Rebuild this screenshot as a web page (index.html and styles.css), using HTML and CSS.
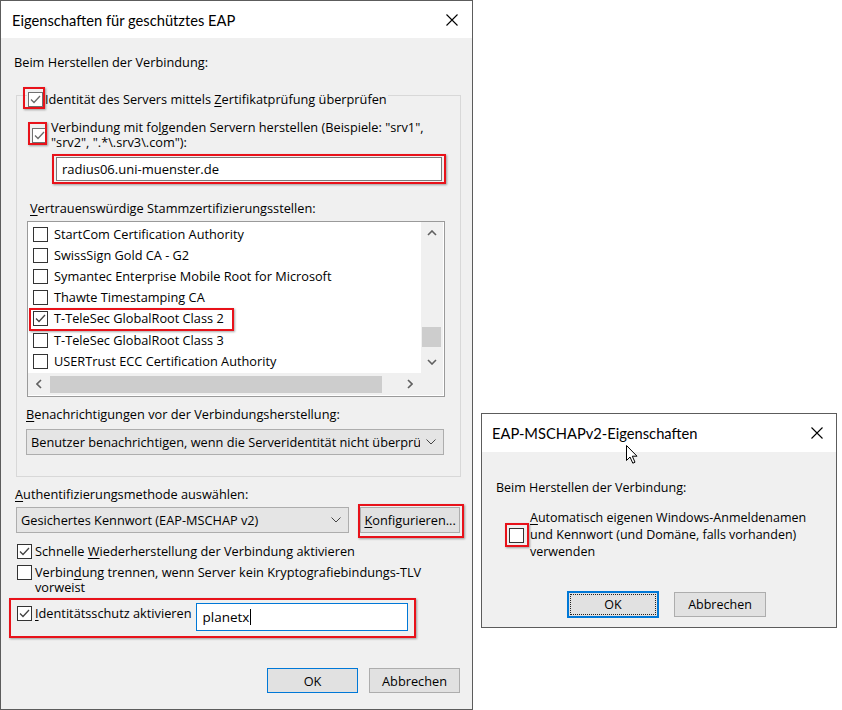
FILE: index.html
```html
<!DOCTYPE html>
<html lang="de">
<head>
<meta charset="utf-8">
<title>EAP</title>
<link rel="stylesheet" href="styles.css">
</head>
<body>
<div class="win eap">
  <div class="titlebar">
    <span class="title">Eigenschaften für geschütztes EAP</span>
    <svg class="close" width="12" height="12" viewBox="0 0 12 12"><path d="M0.5 0.5 L11.5 11.5 M11.5 0.5 L0.5 11.5" stroke="#000" stroke-width="1.1" fill="none"/></svg>
  </div>
  <div class="body">
    <div class="label intro">Beim Herstellen der Verbindung:</div>
    <div class="group">
      <div class="caption">
        <span class="cb gray checked"><svg viewBox="0 0 13 13"><path d="M2 6.5 L5 9.5 L11 3" stroke="#6b6b6b" stroke-width="1.3" fill="none"/></svg></span>
        <span class="txt">Identität des Servers mittels <u>Z</u>ertifikatprüfung überprüfen</span>
      </div>
      <div class="row servers">
        <span class="cb gray checked"><svg viewBox="0 0 13 13"><path d="M2 6.5 L5 9.5 L11 3" stroke="#6b6b6b" stroke-width="1.3" fill="none"/></svg></span>
        <span class="txt">Verbindung mit fo<u>l</u>genden Servern herstellen (Beispiele: "srv1",<br>"srv2", ".*\.srv3\.com"):</span>
      </div>
      <div class="textbox server-input">radius06.uni-muenster.de</div>
      <div class="label ca-label"><u>V</u>ertrauenswürdige Stammzertifizierungsstellen:</div>
      <div class="listbox">
        <div class="items">
          <div class="item"><span class="cb"></span>StartCom Certification Authority</div>
          <div class="item"><span class="cb"></span>SwissSign Gold CA - G2</div>
          <div class="item"><span class="cb"></span>Symantec Enterprise Mobile Root for Microsoft</div>
          <div class="item"><span class="cb"></span>Thawte Timestamping CA</div>
          <div class="item"><span class="cb checked"><svg viewBox="0 0 13 13"><path d="M2 6.5 L5 9.5 L11 3" stroke="#444" stroke-width="1.3" fill="none"/></svg></span>T-TeleSec GlobalRoot Class 2</div>
          <div class="item"><span class="cb"></span>T-TeleSec GlobalRoot Class 3</div>
          <div class="item"><span class="cb"></span>USERTrust ECC Certification Authority</div>
        </div>
        <div class="vscroll">
          <svg class="arr" width="10" height="6" viewBox="0 0 10 6"><path d="M1 5 L5 1 L9 5" stroke="#606060" stroke-width="1.6" fill="none"/></svg>
          <div class="vtrack"><div class="vthumb"></div></div>
          <svg class="arr" width="10" height="6" viewBox="0 0 10 6"><path d="M1 1 L5 5 L9 1" stroke="#606060" stroke-width="1.6" fill="none"/></svg>
        </div>
        <div class="hscroll">
          <svg class="arr" width="6" height="10" viewBox="0 0 6 10"><path d="M5 1 L1 5 L5 9" stroke="#606060" stroke-width="1.6" fill="none"/></svg>
          <div class="htrack"><div class="hthumb"></div></div>
          <svg class="arr" width="6" height="10" viewBox="0 0 6 10"><path d="M1 1 L5 5 L1 9" stroke="#606060" stroke-width="1.6" fill="none"/></svg>
        </div>
        <div class="corner"></div>
      </div>
      <div class="label notify-label"><u>B</u>enachrichtigungen vor der Verbindungsherstellung:</div>
      <div class="combo notify">
        <span class="ctext">Benutzer benachrichtigen, wenn die Serveridentität nicht überprüft werden kann</span>
        <svg class="chev" width="10" height="6" viewBox="0 0 10 6"><path d="M0.5 0.5 L5 5 L9.5 0.5" stroke="#444" stroke-width="1" fill="none"/></svg>
      </div>
    </div>
    <div class="label auth-label"><u>A</u>uthentifizierungsmethode auswählen:</div>
    <div class="auth-row">
      <div class="combo method">
        <span class="ctext">Gesichertes Kennwort (EAP-MSCHAP v2)</span>
        <svg class="chev" width="10" height="6" viewBox="0 0 10 6"><path d="M0.5 0.5 L5 5 L9.5 0.5" stroke="#444" stroke-width="1" fill="none"/></svg>
      </div>
      <div class="btn konf"><u>K</u>onfigurieren...</div>
    </div>
    <div class="row opt fast">
      <span class="cb checked"><svg viewBox="0 0 13 13"><path d="M2 6.5 L5 9.5 L11 3" stroke="#444" stroke-width="1.3" fill="none"/></svg></span>
      <span class="txt">Schnelle <u>W</u>iederherstellung der Verbindung aktivieren</span>
    </div>
    <div class="row opt tlv">
      <span class="cb"></span>
      <span class="txt">Verbin<u>d</u>ung trennen, wenn Server kein Kryptografiebindungs-TLV<br>vorweist</span>
    </div>
    <div class="row opt ident">
      <span class="cb checked"><svg viewBox="0 0 13 13"><path d="M2 6.5 L5 9.5 L11 3" stroke="#444" stroke-width="1.3" fill="none"/></svg></span>
      <span class="txt"><u>I</u>dentitätsschutz aktivieren</span>
      <div class="textbox focus ident-input">planetx<span class="caret"></span></div>
    </div>
    <div class="footer">
      <div class="btn default">OK</div>
      <div class="btn">Abbrechen</div>
    </div>
  </div>
  <div class="mark m1"></div>
  <div class="mark m2"></div>
  <div class="mark m3"></div>
  <div class="mark m4"></div>
  <div class="mark m5"></div>
  <div class="mark m6"></div>
</div>

<div class="win mschap">
  <div class="titlebar">
    <span class="title">EAP-MSCHAPv2-Eigenschaften</span>
    <svg class="close" width="12" height="12" viewBox="0 0 12 12"><path d="M0.5 0.5 L11.5 11.5 M11.5 0.5 L0.5 11.5" stroke="#000" stroke-width="1.1" fill="none"/></svg>
  </div>
  <div class="body">
    <div class="label intro2">Beim Herstellen der Verbindung:</div>
    <div class="row auto">
      <span class="cb"></span>
      <span class="txt"><u>A</u>utomatisch eigenen Windows-Anmeldenamen<br>und Kennwort (und Domäne, falls vorhanden)<br>verwenden</span>
    </div>
    <div class="footer2">
      <div class="btn default focusring"><span>OK</span></div>
      <div class="btn">Abbrechen</div>
    </div>
  </div>
  <div class="mark m7"></div>
  <svg class="cursor" width="14" height="20" viewBox="0 0 14 20"><path d="M0.5 0.5 L0.5 15.5 L4 12 L6.8 18.2 L9 17.2 L6.3 11.2 L11 11.2 Z" fill="#fff" stroke="#000" stroke-width="1" stroke-linejoin="miter"/></svg>
</div>
</body>
</html>
```
FILE: styles.css
```css
* { box-sizing: border-box; }
html, body { margin: 0; padding: 0; }
body {
  width: 842px;
  height: 710px;
  background: #fff;
  position: relative;
  overflow: hidden;
  font-family: "Open Sans", "Noto Sans", sans-serif;
  font-size: 12.75px;
  color: #000;
}
u { text-decoration: underline; text-underline-offset: 2px; text-decoration-thickness: 1px; }

.win {
  position: absolute;
  background: #f0f0f0;
  border: 1px solid #5c5c5c;
  display: flex;
  flex-direction: column;
}
.eap { left: 0; top: 0; width: 473px; height: 710px; }
.mschap { left: 481px; top: 413px; width: 356px; height: 215px; font-size: 12.5px; }

.titlebar {
  background: #fff;
  height: 37px;
  display: flex;
  align-items: center;
  justify-content: space-between;
  padding: 0 14px 0 11px;
  flex: none;
}
.title { font-family: Lato, "Open Sans", sans-serif; font-size: 14.7px; }
.mschap .titlebar { height: 38px; padding: 0 13px 0 10px; }

.body { flex: 1; display: flex; flex-direction: column; padding: 0 12px 0 13px; }
.label { line-height: 16px; white-space: nowrap; }
.intro { margin-top: 16px; }

.cb {
  width: 15px; height: 15px;
  border: 1px solid #333;
  background: #fff;
  flex: none;
  display: inline-flex;
}
.cb svg { width: 13px; height: 13px; }
.cb.gray { border-color: #707070; }

.row { display: flex; align-items: center; }
.row .txt { line-height: 16px; white-space: nowrap; }

.group {
  margin-top: 25px;
  margin-left: 2px;
  width: 445px;
  border: 1px solid #d8d8d8;
  display: flex;
  flex-direction: column;
  align-items: flex-start;
  padding-bottom: 21px;
}
.caption {
  margin: -5px 0 0 10px;
  padding: 0 1px;
  background: #f0f0f0;
  display: flex;
  align-items: center;
  gap: 2px;
  line-height: 16px;
  white-space: nowrap;
}
.servers { margin: 13px 0 0 15px; gap: 4px; }
.servers .txt { line-height: 15px; }

.textbox {
  background: #fff;
  border: 1px solid #7a7a7a;
  display: flex;
  align-items: center;
}
.server-input { margin: 7px 0 0 39px; width: 386px; height: 24px; padding-left: 5px; font-size: 13px; }

.ca-label { margin: 19px 0 0 13px; }

.listbox {
  margin: 5px 0 0 10px;
  width: 418px;
  height: 176px;
  border: 1px solid #9a9a9a;
  display: grid;
  grid-template-columns: 393px 22px;
  grid-template-rows: 151px 22px;
  background: #fff;
}
.items { padding-top: 1px; overflow: hidden; }
.item { height: 21.2px; display: flex; align-items: center; padding-left: 5px; gap: 6px; white-space: nowrap; }
.item .cb { margin-top: 1px; }
.vscroll {
  background: #f0f0f0;
  display: flex; flex-direction: column; align-items: center;
}
.vscroll .arr { margin: 8px 0; flex: none; }
.vtrack { flex: 1; width: 100%; display: flex; flex-direction: column; justify-content: flex-end; }
.vthumb { height: 20px; margin: 0 2px 4px 1px; background: #cdcdcd; }
.hscroll {
  background: #f0f0f0;
  display: flex; align-items: center;
}
.hscroll .arr { margin: 0 8px; flex: none; }
.htrack { flex: 1; height: 100%; display: flex; align-items: center; }
.hthumb { height: 17px; width: 332px; background: #cdcdcd; }
.corner { background: #f0f0f0; }

.notify-label { margin: 9px 0 0 9px; }
.combo {
  height: 26px;
  background: #e5e5e5;
  border: 1px solid #adadad;
  display: flex;
  align-items: center;
  padding: 0 6px 0 4px;
  gap: 6px;
}
.ctext { flex: 1; overflow: hidden; white-space: nowrap; }
.chev { flex: none; }
.notify { margin: 7px 0 0 9px; width: 418px; padding-right: 7px; }

.auth-label { margin: 9px 0 0 1px; }
.auth-row { display: flex; margin: 5px 0 0 2px; gap: 11px; }
.method { width: 334px; padding-right: 7px; }
.btn {
  background: #e1e1e1;
  border: 1px solid #adadad;
  display: flex;
  align-items: center;
  justify-content: center;
  white-space: nowrap;
}
.konf { width: 100px; height: 26px; }

.opt { margin-left: 3px; gap: 3px; }
.fast { margin-top: 10px; }
.tlv { margin-top: 6px; align-items: flex-start; }
.tlv .txt { line-height: 15px; }
.ident { margin-top: 8px; gap: 3px; align-items: flex-start; }
.ident .cb { margin-top: 3px; }
.ident .txt { margin-top: 2px; }
.ident-input {
  margin-left: 1px;
  width: 212px; height: 28px;
  border-color: #0078d7;
  padding-left: 6px;
  font-size: 13.5px;
}
.caret { width: 1px; height: 16px; background: #000; margin-left: 1px; }

.footer { margin-top: auto; margin-bottom: 16px; display: flex; justify-content: flex-end; gap: 11px; }
.footer .btn { width: 91px; height: 25px; }
.btn.default { border-color: #0078d7; }

.intro2 { margin: 28px 0 0 1px; }
.auto { margin: 13px 0 0 14px; gap: 6px; }
.auto .txt { line-height: 17px; }
.auto .cb { margin-top: 1px; }
.footer2 { display: flex; margin: 31px 0 0 72px; gap: 15px; align-items: center; }
.footer2 .btn { width: 92px; height: 25px; }
.footer2 .focusring { height: 27px; border-width: 2px; padding: 1px; }
.focusring span {
  flex: 1; align-self: stretch;
  border: 1px dotted #222;
  display: flex; align-items: center; justify-content: center;
}

.mark {
  position: absolute;
  border: 2px solid #e8121a;
  box-shadow: 1px 1px 2px rgba(0,0,0,0.35);
  pointer-events: none;
}
.m1 { left: 22px; top: 86px; width: 22px; height: 22px; }
.m2 { left: 27px; top: 121px; width: 19px; height: 23px; }
.m3 { left: 51px; top: 153px; width: 394px; height: 30px; }
.m4 { left: 28px; top: 307px; width: 205px; height: 23px; }
.m5 { left: 357px; top: 503px; width: 106px; height: 34px; }
.m6 { left: 8px; top: 597px; width: 407px; height: 40px; }
.m7 { left: 23px; top: 109px; width: 24px; height: 24px; }
.cursor { position: absolute; left: 144px; top: 31px; }
```
